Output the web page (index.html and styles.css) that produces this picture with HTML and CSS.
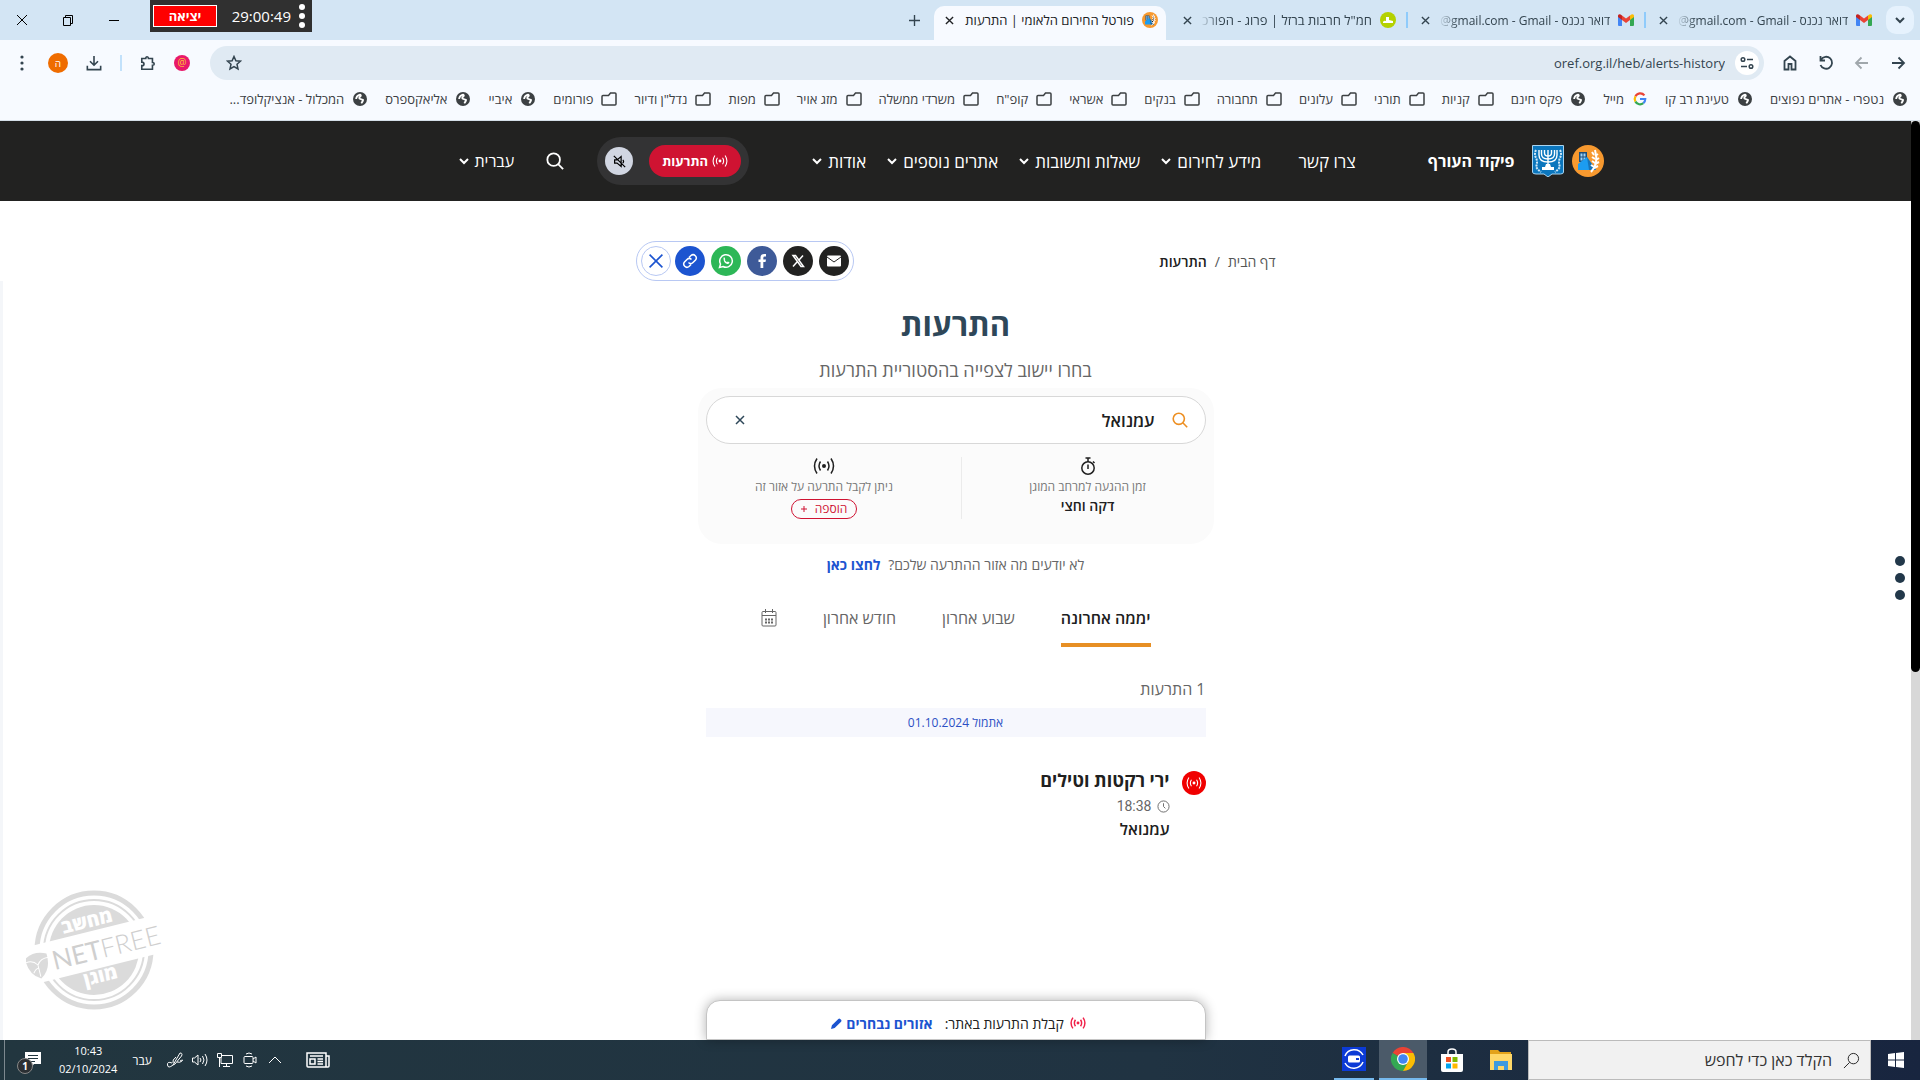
FILE: index.html
```
<!DOCTYPE html>
<html lang="he" dir="rtl">
<head>
    <meta charset="UTF-8">
    <meta name="viewport" content="width=device-width, initial-scale=1.0">
    <title>פורטל החירום הלאומי | התרעות</title>
    <link rel="stylesheet" href="styles.css">
</head>
<body>
    <!-- Shared icons -->
    <svg class="sprite" aria-hidden="true">
        <symbol id="i-close" viewBox="0 0 10 10"><path d="M1 1l8 8M9 1L1 9"/></symbol>
        <symbol id="i-chevron" viewBox="0 0 12 8"><path d="M2 2l4 4 4-4"/></symbol>
        <symbol id="i-globe" viewBox="0 0 16 16"><circle cx="8" cy="8" r="8" fill="#3c4043" stroke="none"/><path d="M3.5 8Q4 4 8 3q2 1 0 2.5T8.5 8t3 1-2 4" stroke="#fff" stroke-width="2"/></symbol>
        <symbol id="i-folder" viewBox="0 0 16 14"><path d="M1 4.5q0-1 1-1h5.5L9.5 1H14q1 0 1 1v10q0 1-1 1H2q-1 0-1-1z"/></symbol>
        <symbol id="i-search" viewBox="0 0 20 20"><circle cx="8.5" cy="8.5" r="7"/><path d="M13.5 13.5L19 19"/></symbol>
        <symbol id="i-alert" viewBox="0 0 22 18"><circle cx="11" cy="9" r="2" fill="currentColor" stroke="none"/><path d="M7.5 4.5q-3 4.5 0 9M14.5 4.5q3 4.5 0 9M4 1.5q-5 7.5 0 15M18 1.5q5 7.5 0 15"/></symbol>
        <symbol id="i-gmail" viewBox="0 0 16 12"><path d="M0 2v9q0 1 1 1h3V5z" fill="#4285f4" stroke="none"/><path d="M16 2v9q0 1-1 1h-3V5z" fill="#34a853" stroke="none"/><path d="M12 1.5V6l4-3V1.5Q15-1 12 1.5z" fill="#fbbc04" stroke="none"/><path d="M4 1.5V6L0 3V1.5Q1-1 4 1.5z" fill="#c5221f" stroke="none"/><path d="M4 1.5l4 3 4-3V6L8 9 4 6z" fill="#ea4335" stroke="none"/></symbol>
        <symbol id="i-oref" viewBox="0 0 32 32"><circle cx="16" cy="16" r="16" fill="#f7992f" stroke="none"/><path d="M7 7h8v10H7z" fill="#1d4f7c" stroke="none"/><path d="M8.5 8.5h2v3h-2zm3 0h2v3h-2zm-3 4h2v3h-2zm3 0h2v3h-2z" fill="#9fd3f7" stroke="none"/><path d="M6 25v-6l9-7 9 13z" fill="#1c9cf0" stroke="none"/><path d="M15 12l9 13h-7z" fill="#1673b8" stroke="none"/><path d="M19 27q8-8 4-22" stroke="#fff" stroke-width="2"/><path d="M22 10l-2-3M23 14l-3-2M23 18l-3-2M22 22l-3-2M23 11l3-2M24 15l3-2M23 19l4-2M22 23l4-2" stroke="#fff" stroke-width="2"/></symbol>
    </svg>

    <!-- Browser tabs -->
    <header class="tabstrip">
        <button class="tab-search" aria-label="חיפוש כרטיסיות"><svg class="icon chev"><use href="#i-chevron"/></svg></button>
        <div class="tab mail-tab">
            <svg class="favicon"><use href="#i-gmail"/></svg>
            <span class="tab-title">דואר נכנס - <bdi dir="ltr">@gmail.com - Gmail</bdi></span>
            <button class="tab-close" aria-label="סגירה"><svg class="icon"><use href="#i-close"/></svg></button>
        </div>
        <div class="tab mail-tab divided">
            <svg class="favicon"><use href="#i-gmail"/></svg>
            <span class="tab-title">דואר נכנס - <bdi dir="ltr">@gmail.com - Gmail</bdi></span>
            <button class="tab-close" aria-label="סגירה"><svg class="icon"><use href="#i-close"/></svg></button>
        </div>
        <div class="tab divided">
            <svg class="favicon" viewBox="0 0 16 16"><circle cx="8" cy="8" r="8" fill="#b4d100"/><path d="M3 10q1-2 3-1V5h3v3l4 1v2H3z" fill="#fff"/></svg>
            <span class="tab-title">חמ"ל חרבות ברזל | פרוג - הפורכ</span>
            <button class="tab-close" aria-label="סגירה"><svg class="icon"><use href="#i-close"/></svg></button>
        </div>
        <div class="tab active">
            <svg class="favicon"><use href="#i-oref"/></svg>
            <span class="tab-title">פורטל החירום הלאומי | התרעות</span>
            <button class="tab-close" aria-label="סגירה"><svg class="icon"><use href="#i-close"/></svg></button>
        </div>
        <button class="new-tab" aria-label="כרטיסייה חדשה"><svg class="icon" viewBox="0 0 12 12"><path d="M6 0v12M0 6h12"/></svg></button>
        <div class="window-controls">
            <button aria-label="מזעור"><svg class="icon" viewBox="0 0 12 12"><path d="M1 6.5h10"/></svg></button>
            <button aria-label="שחזור"><svg class="icon" viewBox="0 0 12 12"><path d="M1.5 3.5h7v8h-7zM3.5 3.5v-2h7v8h-2"/></svg></button>
            <button aria-label="סגירת החלון"><svg class="icon" viewBox="0 0 12 12"><path d="M1 1l10 10M11 1L1 11"/></svg></button>
        </div>
        <div class="timer">
            <svg class="timer-dots" viewBox="0 0 6 24"><circle cx="3" cy="3" r="3"/><circle cx="3" cy="12" r="3"/><circle cx="3" cy="21" r="3"/></svg>
            <span>29:00:49</span>
            <button class="timer-exit">יציאה</button>
        </div>
    </header>

    <!-- Address bar -->
    <div class="toolbar">
        <button aria-label="קדימה"><svg class="icon" viewBox="0 0 16 16"><path d="M2 8h12M8.5 2.5L14 8l-5.5 5.5"/></svg></button>
        <button class="dim" aria-label="אחורה"><svg class="icon" viewBox="0 0 16 16"><path d="M14 8H2M7.5 2.5L2 8l5.5 5.5"/></svg></button>
        <button aria-label="רענון"><svg class="icon" viewBox="0 0 16 16"><path d="M3 4.5A6 6 0 1 1 2.5 10M2.5 1v4.5H7"/></svg></button>
        <button aria-label="דף הבית"><svg class="icon" viewBox="0 0 16 16"><path d="M2.5 14.5V6L8 1.5 13.5 6v8.5h-4V9h-3v5.5z"/></svg></button>
        <div class="omnibox">
            <button class="site-info" aria-label="פרטי האתר"><svg class="icon" viewBox="0 0 16 16"><circle cx="4" cy="4.5" r="1.8"/><path d="M8 4.5h6M2 11.5h6"/><circle cx="12" cy="11.5" r="1.8"/></svg></button>
            <input class="url" type="text" dir="ltr" aria-label="כתובת" value="oref.org.il/heb/alerts-history">
            <button class="star" aria-label="הוספה לסימניות"><svg class="icon" viewBox="0 0 16 16"><path d="M8 1.5l1.9 4.3 4.6.4-3.5 3.1 1 4.6-4-2.4-4 2.4 1-4.6-3.5-3.1 4.6-.4z"/></svg></button>
        </div>
        <div class="extensions">
            <span class="ext-mail">@</span>
            <button aria-label="תוספים"><svg class="icon" viewBox="0 0 18 18"><path d="M2 4h4.5q0-2 1.5-2t1.5 2H14v4.5q2 0 2 1.5t-2 1.5V16H2v-4q2.5 0 2.5-2T2 8z"/></svg></button>
            <i class="bar"></i>
            <button aria-label="הורדות"><svg class="icon" viewBox="0 0 18 18"><path d="M9 1v10M4.5 7L9 11.5 13.5 7M1.5 12v4.5h15V12"/></svg></button>
            <span class="avatar">ה</span>
            <button aria-label="תפריט"><svg class="icon solid" viewBox="0 0 16 16"><circle cx="8" cy="2" r="1.6"/><circle cx="8" cy="8" r="1.6"/><circle cx="8" cy="14" r="1.6"/></svg></button>
        </div>
    </div>

    <!-- Bookmarks -->
    <nav class="bookmarks">
        <a href="#"><svg class="icon"><use href="#i-globe"/></svg>נטפרי - אתרים נפוצים</a>
        <a href="#"><svg class="icon"><use href="#i-globe"/></svg>טעינת רב קו</a>
        <a href="#"><svg class="icon google" viewBox="0 0 16 16"><path d="M13 3.8A6 6 0 0 0 2.8 5" stroke="#ea4335"/><path d="M2.8 5a6 6 0 0 0 0 6" stroke="#fbbc04"/><path d="M2.8 11a6 6 0 0 0 9 1.8" stroke="#34a853"/><path d="M11.8 12.8Q14 11 14 8H8" stroke="#4285f4"/></svg>מייל</a>
        <a href="#"><svg class="icon"><use href="#i-globe"/></svg>פקס חינם</a>
        <a href="#"><svg class="icon"><use href="#i-folder"/></svg>קניות</a>
        <a href="#"><svg class="icon"><use href="#i-folder"/></svg>תורני</a>
        <a href="#"><svg class="icon"><use href="#i-folder"/></svg>עלונים</a>
        <a href="#"><svg class="icon"><use href="#i-folder"/></svg>תחבורה</a>
        <a href="#"><svg class="icon"><use href="#i-folder"/></svg>בנקים</a>
        <a href="#"><svg class="icon"><use href="#i-folder"/></svg>אשראי</a>
        <a href="#"><svg class="icon"><use href="#i-folder"/></svg>קופ"ח</a>
        <a href="#"><svg class="icon"><use href="#i-folder"/></svg>משרדי ממשלה</a>
        <a href="#"><svg class="icon"><use href="#i-folder"/></svg>מזג אויר</a>
        <a href="#"><svg class="icon"><use href="#i-folder"/></svg>מפות</a>
        <a href="#"><svg class="icon"><use href="#i-folder"/></svg>נדל"ן ודיור</a>
        <a href="#"><svg class="icon"><use href="#i-folder"/></svg>פורומים</a>
        <a href="#"><svg class="icon"><use href="#i-globe"/></svg>איביי</a>
        <a href="#"><svg class="icon"><use href="#i-globe"/></svg>אליאקספרס</a>
        <a href="#"><svg class="icon"><use href="#i-globe"/></svg>המכלול - אנציקלופד...</a>
    </nav>

    <!-- Web page -->
    <div class="viewport">
        <div class="scrollbar"><div class="thumb"></div></div>
        <div class="site">
            <header class="site-header">
                <div class="header-inner">
                    <a class="brand" href="#">
                        <svg class="logo"><use href="#i-oref"/></svg>
                        <svg class="logo" viewBox="0 0 32 32"><path d="M.5.5h31V27q0 2-3 2H20l-4 3-4-3H4q-3.5 0-3.5-2z" fill="#0b76bd" stroke="#a9d4f0"/><path d="M16 5v16M12.5 5v3q0 3 3.5 3t3.5-3V5M9.5 5v4q0 5 6.5 5t6.5-5V5M7 5v5q0 7 9 7t9-7V5" stroke="#fff" stroke-width="1.4"/><path d="M14 19h4l1 3h3v3H10v-3h3z" fill="#fff"/><path d="M4 5q-2 4 0 8t0 9q2 3 5 5M28 5q2 4 0 8t0 9q-2 3-5 5" stroke="#cfe8f8" stroke-width="2" stroke-dasharray="2 1"/></svg>
                        <span>פיקוד העורף</span>
                    </a>
                    <nav class="main-nav">
                        <a class="contact" href="#">צרו קשר</a>
                        <a href="#">מידע לחירום<svg class="icon chev"><use href="#i-chevron"/></svg></a>
                        <a href="#">שאלות ותשובות<svg class="icon chev"><use href="#i-chevron"/></svg></a>
                        <a href="#">אתרים נוספים<svg class="icon chev"><use href="#i-chevron"/></svg></a>
                        <a href="#">אודות<svg class="icon chev"><use href="#i-chevron"/></svg></a>
                    </nav>
                    <div class="alert-switch">
                        <button class="alerts-btn"><svg class="icon"><use href="#i-alert"/></svg>התרעות</button>
                        <button class="mute-btn" aria-label="השתקה"><svg class="icon" viewBox="0 0 16 16"><path d="M2 6h3l5-4v12l-5-4H2zM12 6q2 2 0 4M1 1l14 14"/></svg></button>
                    </div>
                    <button class="search-btn" aria-label="חיפוש"><svg class="icon"><use href="#i-search"/></svg></button>
                    <button class="lang-btn">עברית<svg class="icon chev"><use href="#i-chevron"/></svg></button>
                </div>
            </header>

            <div class="page-top">
                <nav class="breadcrumb"><a href="#">דף הבית</a><span>/</span><b>התרעות</b></nav>
                <div class="share">
                    <button class="mail" aria-label="דואר"><svg class="icon solid" viewBox="0 0 16 16"><rect x="1" y="2.5" width="14" height="11" rx="1"/><path class="cut" d="M1 4l7 5 7-5"/></svg></button>
                    <button class="x" aria-label="X"><svg class="icon" viewBox="0 0 16 16"><path d="M3 2.5h2.5l8 11H11zM13 2.5L9 7M7 9l-4 4.5"/></svg></button>
                    <button class="facebook" aria-label="פייסבוק"><svg class="icon solid" viewBox="0 0 16 16"><path d="M6.5 15V9h-2V6.5h2v-2Q6.5 1 10 1h2v2.5h-1.3q-1.4 0-1.4 1.4v1.6H12L11.5 9H9.3v6z"/></svg></button>
                    <button class="whatsapp" aria-label="וואטסאפ"><svg class="icon" viewBox="0 0 16 16"><path d="M1.5 14.5l1-3.5A6.3 6.3 0 1 1 5 13.5z"/><path d="M5.5 5q.2-.8 1-.6l.8 1.8-.6.9q.8 1.5 2.3 2.1l.8-.8 1.7.8q0 2-2.2 1.8Q5.3 9.8 5.5 5z" fill="#fff" stroke="none"/></svg></button>
                    <button class="link" aria-label="העתקת קישור"><svg class="icon" viewBox="0 0 16 16"><path d="M7 4.5l2-2A3.2 3.2 0 0 1 13.5 7L11 9.5a3.2 3.2 0 0 1-4.5 0M9 11.5l-2 2A3.2 3.2 0 0 1 2.5 9L5 6.5a3.2 3.2 0 0 1 4.5 0"/></svg></button>
                    <button class="dismiss" aria-label="סגירה"><svg class="icon"><use href="#i-close"/></svg></button>
                </div>
            </div>

            <main class="history">
                <h1>התרעות</h1>
                <p class="subtitle">בחרו יישוב לצפייה בהסטוריית התרעות</p>

                <section class="area-card">
                    <div class="search-box">
                        <svg class="icon"><use href="#i-search"/></svg>
                        <input type="text" aria-label="יישוב" value="עמנואל">
                        <button class="clear" aria-label="ניקוי"><svg class="icon"><use href="#i-close"/></svg></button>
                    </div>
                    <div class="area-info">
                        <div class="info">
                            <svg class="icon" viewBox="0 0 16 18"><circle cx="8" cy="11" r="6.2"/><path d="M8 7.5V12M5.5 1h5M8 1v4M13 4.5L14.5 6"/></svg>
                            <span>זמן ההגעה למרחב המוגן</span>
                            <strong>דקה וחצי</strong>
                        </div>
                        <div class="info">
                            <svg class="icon wide"><use href="#i-alert"/></svg>
                            <span>ניתן לקבל התרעה על אזור זה</span>
                            <button class="add-btn">הוספה<svg class="icon" viewBox="0 0 6 6"><path d="M3 0v6M0 3h6"/></svg></button>
                        </div>
                    </div>
                </section>

                <p class="help">לא יודעים מה אזור ההתרעה שלכם? <a href="#">לחצו כאן</a></p>

                <div class="periods">
                    <button class="period current">יממה אחרונה</button>
                    <button class="period">שבוע אחרון</button>
                    <button class="period">חודש אחרון</button>
                    <button class="period" aria-label="בחירת תאריך"><svg class="icon" viewBox="0 0 16 18"><path d="M1 3.5q0-1 1-1h12q1 0 1 1V16q0 1-1 1H2q-1 0-1-1zM1 6.5h14M4.5 0v4M11.5 0v4"/><path d="M4 10.5h8M4 13.5h8" stroke-width="2" stroke-dasharray="2 1"/></svg></button>
                </div>

                <p class="count">1 התרעות</p>
                <p class="date">אתמול 01.10.2024</p>
                <article class="alert">
                    <span class="badge"><svg class="icon"><use href="#i-alert"/></svg></span>
                    <div>
                        <h2>ירי רקטות וטילים</h2>
                        <p class="time"><svg class="icon" viewBox="0 0 14 14"><circle cx="7" cy="7" r="6"/><path d="M7 3.5V7l2 2"/></svg>18:38</p>
                        <p class="place">עמנואל</p>
                    </div>
                </article>
            </main>

            <svg class="more-dots" viewBox="0 0 10 44"><circle cx="5" cy="5" r="5"/><circle cx="5" cy="22" r="5"/><circle cx="5" cy="39" r="5"/></svg>

            <!-- NetFree stamp -->
            <svg class="stamp" viewBox="0 0 150 124" direction="ltr">
                <circle cx="68" cy="62" r="57" fill="none" stroke="#dbdbdb" stroke-width="5"/>
                <circle cx="68" cy="62" r="50" fill="none" stroke="#dbdbdb" stroke-width="2"/>
                <circle cx="68" cy="62" r="45" fill="#dbdbdb"/>
                <g transform="rotate(-14 68 62)">
                    <rect x="-4" y="43" width="150" height="38" fill="#fff"/>
                    <text class="stamp-word" x="68" y="39" text-anchor="middle">מחשב</text>
                    <text class="stamp-word" x="68" y="95" text-anchor="middle">מוגן</text>
                    <path d="M-1 54q11-6 22 0 1 16-11 23Q-2 70-1 54z" fill="#dbdbdb"/>
                    <path d="M-1 58q7-1 11 5 4-6 12-5M10 63v12M4 70q3-4 6-4" fill="none" stroke="#fff"/>
                    <text class="stamp-net" x="25" y="72">NET</text>
                    <text class="stamp-free" x="75" y="72">FREE</text>
                </g>
            </svg>

            <div class="alerts-bar">
                <svg class="icon"><use href="#i-alert"/></svg>
                <span>קבלת התרעות באתר:</span>
                <a href="#">אזורים נבחרים<svg class="icon solid" viewBox="0 0 12 12"><path d="M0 12l1-4 7-7q1-1 2 0l1 1q1 1 0 2l-7 7z"/></svg></a>
            </div>
        </div>
    </div>

    <!-- Taskbar -->
    <footer class="taskbar">
        <button class="start" aria-label="התחל"><svg class="icon solid" viewBox="0 0 16 16"><path d="M0 2l7-1v6.5H0zM8 1l8-1v7.5H8zM0 8.5h7V15l-7-1zM8 8.5h8V16l-8-1z"/></svg></button>
        <label class="task-search">
            <svg class="icon" viewBox="0 0 18 18"><circle cx="11" cy="7" r="5.5"/><path d="M7 11l-6 6"/></svg>
            <input type="text" placeholder="הקלד כאן כדי לחפש">
        </label>
        <div class="apps">
            <button class="app" aria-label="סייר הקבצים"><svg viewBox="0 0 24 24"><path d="M1 2h8l2 2h11v4H1z" fill="#e3a21a"/><path d="M1 6h22v16H1z" fill="#ffd768"/><path d="M5 22v-9h14v9h-4v-4H9v4z" fill="#3f9ade"/></svg></button>
            <button class="app" aria-label="חנות"><svg viewBox="0 0 24 24"><path d="M8 7V4q0-3 4-3t4 3v3" fill="none" stroke="#fff" stroke-width="1.5"/><path d="M1 6h22v16q0 2-2 2H3q-2 0-2-2z" fill="#fff"/><path d="M6 9h5v5H6z" fill="#f25022"/><path d="M12.5 9h5v5h-5z" fill="#7fba00"/><path d="M6 15.5h5v5H6z" fill="#00a4ef"/><path d="M12.5 15.5h5v5h-5z" fill="#ffb900"/></svg></button>
            <button class="app focused" aria-label="כרום"><svg viewBox="0 0 24 24"><path d="M12 12L1.6 6A12 12 0 0 1 22.4 6z" fill="#ea4335"/><path d="M12 12L1.6 6A12 12 0 0 0 12 24l5-9z" fill="#34a853"/><path d="M12 12l5 3-5 9A12 12 0 0 0 22.4 6H12z" fill="#fbbc04"/><circle cx="12" cy="12" r="6" fill="#fff"/><circle cx="12" cy="12" r="4.8" fill="#4285f4"/></svg></button>
            <button class="app open" aria-label="הקלטה"><svg viewBox="0 0 24 24"><path d="M0 0h24v24H0z" fill="#0c3bd6"/><path d="M3 9a10 10 0 0 1 18-1M21 15a10 10 0 0 1-18 1" fill="none" stroke="#fff" stroke-width="1.5"/><rect x="6" y="8.5" width="12" height="7" rx="1.5" fill="#fff"/><path d="M14 11h3v2h-3z" fill="#0c3bd6"/></svg></button>
        </div>
        <div class="tray">
            <svg class="icon news" viewBox="0 0 24 16"><path d="M1 1h19v14H2q-1 0-1-1zM20 4h3v10q0 1-1 1h-2M4 4h13M4 7h5v5H4zM11.5 7H17M11.5 9.5H17M11.5 12H17"/></svg>
            <svg class="icon" viewBox="0 0 16 16"><path d="M2 11l6-6 6 6"/></svg>
            <svg class="icon" viewBox="0 0 16 16"><rect x="2" y="4.5" width="9" height="7" rx="1"/><path d="M11 7l3-2v6l-3-2M4 2q3-2 6 0M4 14q3 2 6 0"/></svg>
            <svg class="icon" viewBox="0 0 16 16"><path d="M5 3.5h10.5v8H4V6M9.5 11v4M6 14.5h7M.5 1.5h4v4h-4zM2.5 5v10"/></svg>
            <svg class="icon" viewBox="0 0 16 16"><path d="M.5 6h2L6 3v10l-3.5-3h-2zM8 6q2 2 0 4M10.5 4q3 4 0 8M13 2q4 6 0 12"/></svg>
            <svg class="icon" viewBox="0 0 16 16"><path d="M5 11q-5-2-4.5 2T6 13l7-12q3 0 1.5 3L8 12l-2 1M9 5q-4 3-3 6M13 9q4-2 2 0t-5 1"/></svg>
            <span class="lang">עבר</span>
            <span class="clock">10:43<br>02/10/2024</span>
            <span class="notify">
                <svg class="icon solid" viewBox="0 0 16 16"><path d="M0 0h16v12H9l-3 4v-4H0z"/><path class="cut" d="M3 3.5h10M3 6.5h10M3 9.5h7"/></svg>
                <b>1</b>
            </span>
        </div>
    </footer>
</body>
</html>
```
FILE: styles.css
```
* {
    box-sizing: border-box;
}

body {
    font-family: "Open Sans", "Liberation Sans", sans-serif;
    font-size: 13px;
    margin: 0;
    display: flex;
    flex-direction: column;
    height: 100vh;
    overflow: hidden;
    background-color: #fff;
    color: #202020;
}

h1, h2, p {
    margin: 0;
}

a {
    color: inherit;
    text-decoration: none;
}

button {
    display: flex;
    align-items: center;
    justify-content: center;
    padding: 0;
    border: none;
    background: none;
    color: inherit;
    font: inherit;
    cursor: pointer;
}

input {
    min-width: 0;
    padding: 0;
    border: none;
    outline: none;
    background: none;
    color: inherit;
    font: inherit;
}

.sprite {
    position: absolute;
    width: 0;
    height: 0;
}

.icon {
    flex: none;
    width: 16px;
    height: 16px;
    fill: none;
    stroke: currentColor;
    stroke-width: 2;
}

.icon.solid {
    fill: currentColor;
    stroke: none;
}

.icon.chev {
    width: 12px;
    height: 8px;
}

/* Tabs */
.tabstrip {
    position: relative;
    display: flex;
    flex: none;
    align-items: center;
    height: 40px;
    padding: 0 6px;
    background-color: #d3e5f4;
    color: #33444f;
}

.tab-search {
    width: 28px;
    height: 28px;
    margin-left: 3px;
    border-radius: 10px;
    background-color: #e6f2fd;
}

.tab {
    position: relative;
    display: flex;
    align-items: center;
    gap: 8px;
    width: 232px;
    height: 34px;
    margin: 6px 3px 0;
    padding: 0 8px 6px 10px;
}

.tab.divided::before {
    content: "";
    position: absolute;
    top: 6px;
    right: -4px;
    width: 2px;
    height: 16px;
    background-color: #8fcbfb;
}

.tab.active {
    border-radius: 10px 10px 0 0;
    background-color: #f7faff;
    color: #202124;
}

.mail-tab {
    font-size: 12px;
}

.favicon {
    flex: none;
    width: 16px;
    height: 16px;
}

.tab-title {
    flex: 1;
    overflow: hidden;
    white-space: nowrap;
    mask-image: linear-gradient(to left, #000 88%, transparent);
}

.tab.active .tab-title {
    mask-image: none;
}

.tab-close {
    width: 10px;
    height: 14px;
}

.tab-close .icon {
    width: 9px;
    height: 9px;
    stroke-width: 1.5;
}

.new-tab {
    width: 28px;
    height: 28px;
    margin-right: 3px;
}

.new-tab .icon {
    width: 11px;
    height: 11px;
    stroke-width: 1.5;
}

.window-controls {
    display: flex;
    gap: 34px;
    margin-right: auto;
    padding-left: 10px;
    color: #000;
}

.window-controls .icon {
    width: 12px;
    height: 12px;
    stroke-width: 1;
}

.timer {
    position: absolute;
    top: 0;
    left: 150px;
    display: flex;
    align-items: center;
    gap: 8px;
    width: 162px;
    height: 32px;
    padding: 0 7px 0 3px;
    background-color: #303030;
    color: #fff;
    font-size: 15px;
}

.timer-dots {
    width: 6px;
    height: 24px;
    fill: #fff;
}

.timer-exit {
    width: 64px;
    height: 22px;
    margin-right: auto;
    border: 1px solid #fff;
    background-color: #f00;
    font-size: 13px;
    font-weight: 700;
}

/* Address bar */
.toolbar {
    display: flex;
    flex: none;
    align-items: center;
    gap: 20px;
    height: 46px;
    padding: 0 14px;
    background-color: #f7faff;
    color: #33444f;
}

.toolbar .icon {
    stroke-width: 1.8;
}

.toolbar .solid {
    stroke: none;
}

.dim {
    color: #a0a7ac;
}

.omnibox {
    display: flex;
    flex: 1;
    align-items: center;
    height: 34px;
    margin-right: -2px;
    padding: 0 5px 0 16px;
    border-radius: 17px;
    background-color: #e0eaf3;
}

.site-info {
    width: 24px;
    height: 24px;
    border-radius: 50%;
    background-color: #fff;
}

.omnibox .icon {
    stroke-width: 1.5;
}

.url {
    flex: 1;
    padding: 0 10px;
    text-align: right;
}

.extensions {
    display: flex;
    align-items: center;
    gap: 18px;
}

.ext-mail,
.avatar {
    width: 16px;
    height: 16px;
    border-radius: 50%;
    background-color: #e9186a;
    color: #ffc233;
    font-size: 10px;
    line-height: 15px;
    text-align: center;
}

.avatar {
    width: 20px;
    height: 20px;
    background-color: #ef6c00;
    color: #fff;
    line-height: 20px;
}

.bar {
    width: 2px;
    height: 16px;
    background-color: #c2e1fb;
}

/* Bookmarks */
.bookmarks {
    display: flex;
    flex: none;
    align-items: center;
    gap: 17px;
    height: 35px;
    padding: 0 12px 8px;
    border-bottom: 1px solid #d5dfe8;
    background-color: #f7faff;
    color: #3c4043;
}

.bookmarks a {
    display: flex;
    align-items: center;
    gap: 8px;
    white-space: nowrap;
}

.bookmarks .icon {
    height: 14px;
    stroke-width: 1.5;
}

.bookmarks .google {
    stroke-width: 2.5;
}

/* Web page */
.viewport {
    display: flex;
    flex: 1;
    min-height: 0;
}

.scrollbar {
    flex: none;
    width: 9px;
    background-color: #d8d8d8;
}

.thumb {
    height: 60%;
    border-radius: 5px;
    background-color: #000;
}

.site {
    position: relative;
    display: flex;
    flex: 1;
    flex-direction: column;
    font-size: 14px;
}

/* strip along the left edge, below the header */
.site::before {
    content: "";
    position: absolute;
    top: 160px;
    bottom: 0;
    left: 0;
    width: 3px;
    background-color: #f4f6f9;
}

.site-header {
    background-color: #222221;
    color: #fff;
}

.header-inner {
    display: flex;
    align-items: center;
    max-width: 1296px;
    height: 80px;
    margin: 0 auto;
    font-size: 16px;
}

.brand {
    display: flex;
    align-items: center;
    gap: 8px;
    font-weight: 700;
}

.brand span {
    margin-right: 9px;
}

.logo {
    width: 32px;
    height: 32px;
    fill: none;
}

.main-nav {
    display: flex;
    gap: 20px;
    margin-right: 72px;
    font-size: 17px;
}

.main-nav a {
    display: flex;
    align-items: center;
    gap: 5px;
    white-space: nowrap;
}

.contact {
    margin-left: 17px;
}

.alert-switch {
    display: flex;
    align-items: center;
    gap: 16px;
    height: 48px;
    margin-right: 62px;
    padding: 0 8px;
    border-radius: 24px;
    background-color: #333334;
}

.alerts-btn {
    gap: 4px;
    width: 92px;
    height: 32px;
    border-radius: 16px;
    background-color: #cf1332;
    font-size: 13px;
    font-weight: 700;
}

.alerts-btn .icon {
    stroke-width: 1.5;
}

.mute-btn {
    width: 28px;
    height: 28px;
    border-radius: 50%;
    background-color: #d1d6e2;
    color: #000;
}

.mute-btn .icon {
    width: 13px;
    height: 13px;
    stroke-width: 1.5;
}

.search-btn {
    margin-right: 33px;
}

.search-btn .icon {
    width: 18px;
    height: 18px;
}

.lang-btn {
    gap: 4px;
    margin-right: 32px;
}

.page-top {
    display: flex;
    align-items: center;
    justify-content: space-between;
    width: 640px;
    margin: 40px auto 0;
}

.breadcrumb {
    display: flex;
    gap: 8px;
    color: #555;
}

.breadcrumb b {
    font-weight: 600;
    color: #202020;
}

.share {
    display: flex;
    gap: 6px;
    padding: 4px;
    border: 1px solid #b8c8f3;
    border-radius: 20px;
}

.share button {
    width: 30px;
    height: 30px;
    border-radius: 50%;
    background-color: #222221;
    color: #fff;
}

.share .icon {
    stroke-width: 1.5;
}

.share .icon .cut {
    fill: none;
    stroke: #222221;
    stroke-width: 1;
}

.share .facebook {
    background-color: #3e5a98;
}

.share .whatsapp {
    background-color: #2db757;
}

.share .link {
    background-color: #1c54d0;
}

.share .dismiss {
    margin-right: -2px;
    border: 1px solid #b8c8f3;
    background-color: #fff;
    color: #1c54d0;
}

.share .dismiss .icon {
    stroke-width: 1;
}

.history {
    display: flex;
    flex-direction: column;
    align-items: center;
    width: 516px;
    margin: 23px auto 0;
}

h1 {
    font-size: 31px;
    line-height: 40px;
    color: #2e4759;
}

.subtitle {
    margin-top: 14px;
    font-size: 18px;
    line-height: 24px;
    color: #666;
}

.area-card {
    width: 100%;
    height: 156px;
    margin-top: 6px;
    padding: 8px;
    border-radius: 24px;
    background-color: #fbfbfb;
}

.search-box {
    display: flex;
    align-items: center;
    height: 48px;
    padding: 0 17px 0 28px;
    border: 1px solid #d8d8d8;
    border-radius: 24px;
    background-color: #fff;
}

.search-box .icon {
    color: #ed8f22;
}

.search-box input {
    flex: 1;
    padding: 0 17px;
    font-size: 17px;
    font-weight: 600;
}

.search-box .clear .icon {
    width: 10px;
    height: 10px;
    color: #2e4759;
    stroke-width: 1.5;
}

.area-info {
    display: grid;
    grid-template-columns: 244px 1fr;
    margin-top: 13px;
}

.info {
    display: flex;
    flex-direction: column;
    align-items: center;
    gap: 3px;
    padding-left: 8px;
    font-size: 12px;
    line-height: 18px;
    color: #777;
}

.info + .info {
    padding: 0 18px 0 0;
    border-right: 1px solid #ebebeb;
}

.info > .icon {
    height: 18px;
    color: #202020;
    stroke-width: 1.5;
}

.info > .icon.wide {
    width: 22px;
}

.info strong {
    font-size: 14px;
    font-weight: 600;
    line-height: 14px;
    color: #202020;
}

.add-btn {
    gap: 8px;
    width: 66px;
    height: 20px;
    border: 1px solid #cf1332;
    border-radius: 10px;
    color: #cf1332;
}

.add-btn .icon {
    width: 6px;
    height: 6px;
    stroke-width: 1;
}

.help {
    margin-top: 11px;
    line-height: 20px;
    color: #666;
}

.help a {
    margin-right: 4px;
    font-weight: 700;
    color: #1c54d0;
}

.periods {
    display: flex;
    gap: 46px;
    width: 390px;
    margin-top: 29px;
}

.period {
    height: 43px;
    padding-bottom: 11px;
    border-bottom: 4px solid transparent;
    font-size: 16px;
    white-space: nowrap;
    color: #666;
}

.period.current {
    border-color: #e78f24;
    font-weight: 600;
    color: #202020;
}

.period .icon {
    height: 18px;
    stroke-width: 1;
}

.count {
    width: 500px;
    margin-top: 30px;
    font-size: 16px;
    line-height: 24px;
    color: #666;
}

.date {
    width: 500px;
    margin-top: 7px;
    background-color: #f6f7fd;
    font-size: 12px;
    line-height: 29px;
    text-align: center;
    color: #2c4fc4;
}

.alert {
    display: flex;
    gap: 12px;
    width: 500px;
    margin-top: 30px;
}

.badge {
    display: flex;
    align-items: center;
    justify-content: center;
    width: 24px;
    height: 24px;
    margin-top: 4px;
    border-radius: 50%;
    background-color: #f00000;
    color: #fff;
}

.badge .icon {
    stroke-width: 1.5;
}

h2 {
    font-size: 18px;
    line-height: 26px;
}

.time {
    display: flex;
    align-items: center;
    gap: 5px;
    font-family: Roboto, sans-serif;
    line-height: 26px;
    color: #666;
}

.time .icon {
    width: 13px;
    height: 13px;
    stroke-width: 1;
}

.place {
    font-size: 16px;
    font-weight: 600;
    line-height: 20px;
}

/* Items floating over the page */
.more-dots {
    position: absolute;
    top: 435px;
    right: 6px;
    width: 10px;
    height: 44px;
    fill: #22384a;
}

.stamp {
    position: absolute;
    bottom: 28px;
    left: 26px;
    width: 150px;
    height: 124px;
}

.stamp-word {
    fill: #fff;
    font-size: 19px;
    font-weight: 800;
}

.stamp-net,
.stamp-free {
    fill: #cfcfcf;
    font-family: Lato, sans-serif;
    font-size: 26px;
}

.stamp-free {
    font-weight: 300;
}

.alerts-bar {
    position: absolute;
    bottom: 0;
    left: 50%;
    display: flex;
    align-items: center;
    justify-content: center;
    gap: 6px;
    width: 500px;
    height: 40px;
    padding: 6px 0 0 6px;
    border: 1px solid #c4c4c4;
    border-radius: 14px 14px 0 0;
    background-color: #fff;
    box-shadow: 0 0 12px rgba(0, 0, 0, 0.3);
    transform: translateX(-50%);
}

.alerts-bar > .icon {
    color: #f02048;
}

.alerts-bar a {
    display: flex;
    align-items: center;
    gap: 4px;
    margin-right: 6px;
    font-weight: 700;
    color: #1c54d0;
}

.alerts-bar a .icon {
    width: 11px;
    height: 11px;
}

/* Taskbar */
.taskbar {
    display: flex;
    flex: none;
    height: 40px;
    background: linear-gradient(to left, #18253f, #203342 40%, #22363f);
    color: #fff;
}

.start {
    width: 49px;
}

.task-search {
    display: flex;
    align-items: center;
    gap: 11px;
    width: 343px;
    padding: 0 10px;
    border: 1px solid #bbb;
    background-color: #f1f1f1;
    color: #202020;
    font-size: 16px;
}

.task-search .icon {
    width: 17px;
    height: 17px;
    stroke-width: 1;
}

.task-search input {
    flex: 1;
}

.task-search input::placeholder {
    color: #333;
    opacity: 1;
}

.apps {
    display: flex;
    padding-right: 3px;
}

.app {
    width: 48px;
    margin-left: 1px;
}

.app svg {
    width: 24px;
    height: 24px;
}

.app.focused {
    border-bottom: 2px solid #76b9ed;
    background-color: #4b5a69;
}

.app.open {
    width: 40px;
    margin-right: 4px;
    border-bottom: 2px solid #76b9ed;
}

.tray {
    display: flex;
    align-items: center;
    gap: 9px;
    margin-right: auto;
    margin-left: 4px;
    padding-left: 20px;
    border-left: 1px solid #7d888f;
    font-size: 12px;
}

.tray .icon {
    stroke-width: 1;
}

.tray .news {
    width: 24px;
    margin-left: 14px;
    stroke-width: 1.5;
}

.lang {
    margin: 0 6px;
}

.clock {
    font-size: 11px;
    line-height: 18px;
    text-align: center;
}

.notify {
    position: relative;
    margin-right: 9px;
}

.notify .icon {
    display: block;
}

.notify .cut {
    stroke: #22363f;
}

.notify b {
    position: absolute;
    top: 6px;
    left: -8px;
    width: 16px;
    height: 16px;
    border: 1px solid #888;
    border-radius: 50%;
    background-color: #2b2f33;
    font-size: 10px;
    line-height: 14px;
    text-align: center;
}
```
